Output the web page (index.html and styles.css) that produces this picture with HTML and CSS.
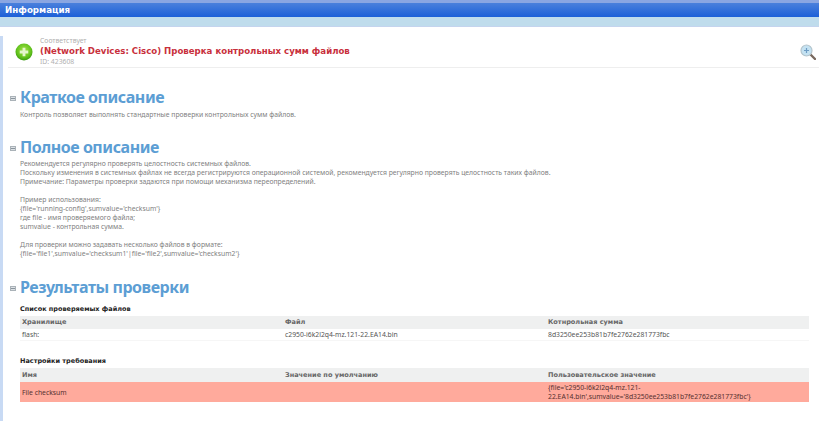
FILE: index.html
```html
<!DOCTYPE html>
<html lang="ru">
<head>
<meta charset="utf-8">
<title>Информация</title>
<link rel="stylesheet" href="styles.css">
</head>
<body>
<header class="titlebar"><span class="title-text">Информация</span></header>
<div class="subbar"></div>
<main class="content">
  <section class="card">
    <svg class="status-icon" width="18" height="18" viewBox="0 0 19 19">
      <defs><radialGradient id="g" cx="50%" cy="40%" r="60%"><stop offset="0" stop-color="#a6e34a"/><stop offset="0.7" stop-color="#62c21c"/><stop offset="1" stop-color="#3a9a10"/></radialGradient></defs>
      <circle cx="9.5" cy="9.5" r="9" fill="url(#g)"/>
      <path d="M8 5h3v3h3v3h-3v3H8v-3H5V8h3z" fill="#e4f6cc"/>
    </svg>
    <div class="card-text">
      <div class="card-muted">Соответствует</div>
      <div class="card-title">(Network Devices: Cisco) Проверка контрольных сумм файлов</div>
      <div class="card-muted">ID: 423608</div>
    </div>
    <svg class="zoom-icon" width="16" height="16" viewBox="0 0 16 16">
      <line x1="10" y1="10" x2="15" y2="15" stroke="#7a6a60" stroke-width="2.4" stroke-linecap="round"/>
      <circle cx="6.5" cy="6.5" r="5.5" fill="#c4e2f2" stroke="#b4c4cc" stroke-width="1.2"/>
      <path d="M4 6.5h5M6.5 4v5" stroke="#6d9cc4" stroke-width="1.2"/>
    </svg>
  </section>

  <section class="block block-first">
    <h2 class="heading"><span class="toggle"></span>Краткое описание</h2>
    <p class="desc">Контроль позволяет выполнять стандартные проверки контрольных сумм файлов.</p>
  </section>

  <section class="block block-full">
    <h2 class="heading"><span class="toggle"></span>Полное описание</h2>
    <p class="desc desc-full">Рекомендуется регулярно проверять целостность системных файлов.<br>
    Поскольку изменения в системных файлах не всегда регистрируются операционной системой, рекомендуется регулярно проверять целостность таких файлов.<br>
    Примечание: Параметры проверки задаются при помощи механизма переопределений.<br><br>
    Пример использования:<br>
    {file='running-config',sumvalue='checksum'}<br>
    где file - имя проверяемого файла;<br>
    sumvalue - контрольная сумма.<br><br>
    Для проверки можно задавать несколько файлов в формате:<br>
    {file='file1',sumvalue='checksum1'|file='file2',sumvalue='checksum2'}</p>
  </section>

  <section class="block block-results">
    <h2 class="heading"><span class="toggle"></span>Результаты проверки</h2>
    <h3 class="sub">Список проверяемых файлов</h3>
    <div class="table">
      <div class="row head"><div>Хранилище</div><div>Файл</div><div>Котнрольная сумма</div></div>
      <div class="row body"><div>flash:</div><div>c2950-i6k2l2q4-mz.121-22.EA14.bin</div><div>8d3250ee253b81b7fe2762e281773fbc</div></div>
    </div>
    <h3 class="sub sub-second">Настройки требования</h3>
    <div class="table">
      <div class="row head head-tall"><div>Имя</div><div>Значение по умолчанию</div><div>Пользовательское значение</div></div>
      <div class="row fail"><div>File checksum</div><div></div><div>{file='c2950-i6k2l2q4-mz.121-22.EA14.bin',sumvalue='8d3250ee253b81b7fe2762e281773fbc'}</div></div>
    </div>
  </section>
</main>
</body>
</html>
```
FILE: styles.css
```css
* { box-sizing: border-box; }
html, body { margin: 0; padding: 0; height: 100%; overflow: hidden; }
body {
  background: #fff;
  font-family: "Noto Sans", "DejaVu Sans", sans-serif;
  color: #808080;
  font-size: 6.8px;
}
.titlebar {
  height: 17px;
  border-top: 3px solid #8aa6e2;
  background: linear-gradient(#4a80dc, #1c60d8);
  padding-left: 5px;
  display: flex;
  align-items: center;
  font-family: "DejaVu Sans", sans-serif;
}
.title-text { color: #fff; font-weight: bold; font-size: 8.7px; }
.subbar {
  height: 10px;
  background: #bfdcec;
  border-bottom: 1px solid #c4d4ee;
}
.content {
  border-left: 3px solid #c8daf4;
  padding-left: 5px;
  height: 394px;
}
.card {
  margin-top: 9px;
  height: 32px;
  display: flex;
  align-items: center;
  border-bottom: 1px solid #eeeeee;
  padding-left: 7px;
  padding-right: 3px;
}
.status-icon { flex: none; }
.card-text { flex: 1; margin-left: 7px; line-height: 10px; }
.card-muted { color: #b0b0b0; font-size: 6.8px; }
.card-title {
  color: #c8303c;
  font-family: "DejaVu Sans", sans-serif;
  font-weight: bold;
  font-size: 8.6px;
  line-height: 11px;
}
.zoom-icon { flex: none; }
.block { padding-left: 12px; padding-right: 10px; }
.block-first { margin-top: 19px; }
.block-full { margin-top: 18px; }
.block-results { margin-top: 19px; }
.heading {
  margin: 0;
  position: relative;
  color: #5c9ed4;
  font-size: 16px;
  letter-spacing: -0.45px;
  font-weight: bold;
  line-height: 20px;
}
.toggle {
  position: absolute;
  left: -10px;
  top: 9px;
  width: 6px;
  height: 5px;
  background: linear-gradient(#dde2e6 40%, #8a949c 40%, #8a949c 60%, #dde2e6 60%);
  border: 1px solid #aab2b8;
}
.desc { margin: 3px 0 0; line-height: 9px; }
.desc-full { margin-top: 2px; }
.sub {
  margin: 7px 0 0;
  color: #222;
  font-family: "DejaVu Sans", sans-serif;
  font-size: 6.5px;
  font-weight: bold;
  line-height: 10px;
}
.sub-second { margin-top: 15px; }
.table { margin-top: 2px; }
.row { display: grid; grid-template-columns: 263px 263px 1fr; }
.row > div { padding: 0 2px; line-height: 9px; }
.head {
  height: 13px;
  align-items: center;
  background: #eff0f0;
  color: #666;
  font-family: "DejaVu Sans", sans-serif;
  font-size: 6.55px;
  font-weight: bold;
}
.head-tall { height: 14px; }
.body { height: 12px; align-items: center; color: #555; border-bottom: 1px solid #f6f6f6; }
.fail { height: 20px; align-items: center; background: #ffaa9c; color: #553030; }
```
